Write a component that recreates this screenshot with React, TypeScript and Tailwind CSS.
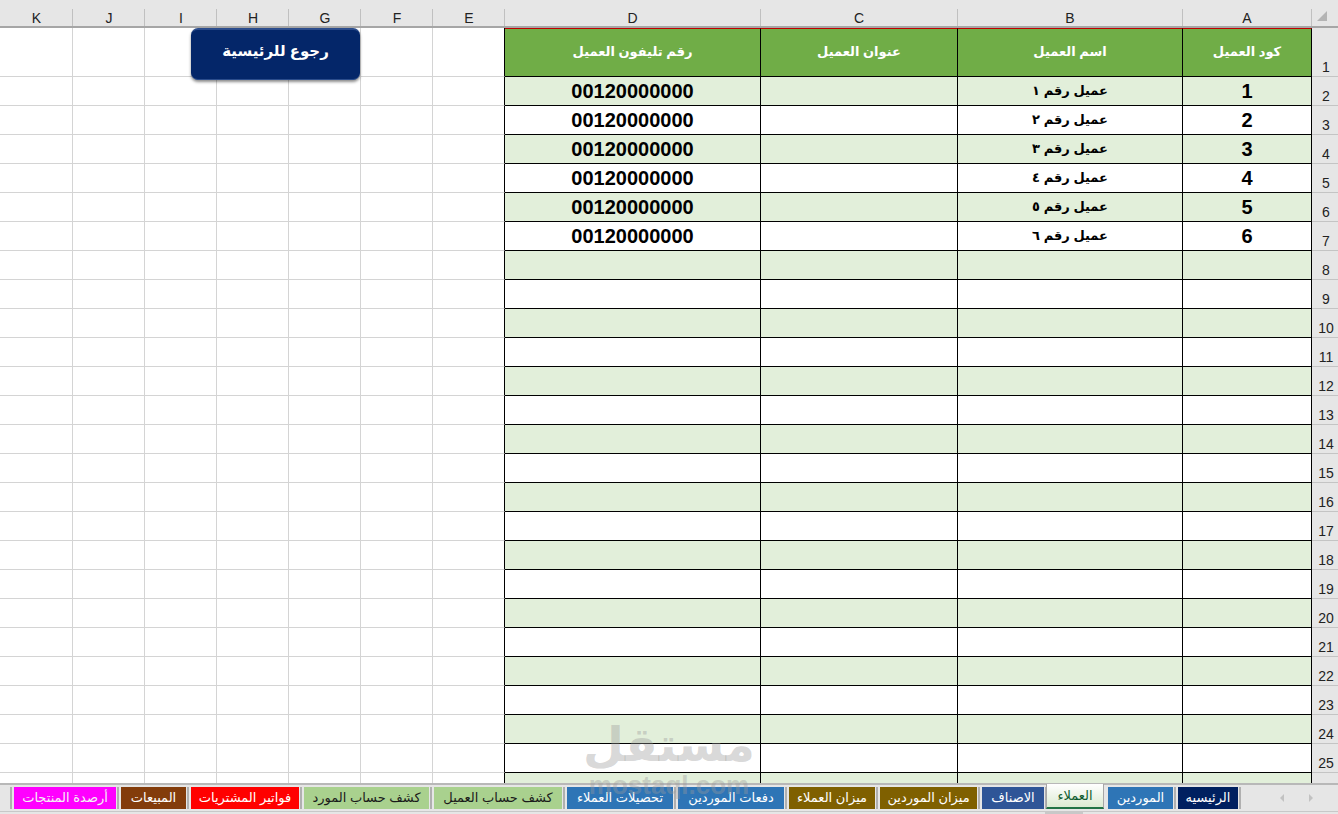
const font = { fontFamily: '"Liberation Sans", "DejaVu Sans", sans-serif' };

const letters = ["K", "J", "I", "H", "G", "F", "E", "D", "C", "B", "A"];
const cols = "grid-cols-[73px_72px_72px_72px_72px_72px_72px_256px_197px_225px_129px_26px]";
const arabicDigits = ["١", "٢", "٣", "٤", "٥", "٦"];

const tabs = [
  { label: "أرصدة المنتجات", w: "w-[102px]", bg: "bg-[#ff00ff]", fg: "text-[#f3f3f3]" },
  { label: "المبيعات", w: "w-[65px]", bg: "bg-[#833c0b]", fg: "text-white" },
  { label: "فواتير المشتريات", w: "w-[108px]", bg: "bg-[#ff0000]", fg: "text-white" },
  { label: "كشف حساب المورد", w: "w-[125px]", bg: "bg-[#a9d18e]", fg: "text-[#1a1a1a]" },
  { label: "كشف حساب العميل", w: "w-[128px]", bg: "bg-[#a9d18e]", fg: "text-[#1a1a1a]" },
  { label: "تحصيلات العملاء", w: "w-[106px]", bg: "bg-[#2e75b6]", fg: "text-white" },
  { label: "دفعات الموردين", w: "w-[106px]", bg: "bg-[#2e75b6]", fg: "text-white" },
  { label: "ميزان العملاء", w: "w-[86px]", bg: "bg-[#7f6000]", fg: "text-white" },
  { label: "ميزان الموردين", w: "w-[97px]", bg: "bg-[#7f6000]", fg: "text-white" },
  { label: "الاصناف", w: "w-[62px]", bg: "bg-[#2f5597]", fg: "text-white" },
];

function Sep() {
  return <div className="w-[2px] h-[22px] ml-[1px] mr-[2px] bg-[#b0b0b0] shrink-0" />;
}

function Row({ n }: { n: number }) {
  const even = n % 2 === 0;
  const bg = even ? "bg-[#e2efda]" : "bg-white";
  const idx = n - 2;
  const hasData = idx < 6;
  const table = `${bg} border-r border-b border-black flex items-center justify-center text-black font-bold`;
  return (
    <>
      {[0, 1, 2, 3, 4, 5, 6].map((i) => (
        <div key={i} className={`border-b border-r bg-white border-[#d4d4d4] ${i === 6 ? "border-r-black" : ""}`} />
      ))}
      <div className={`${table} text-[20px] leading-none`}>{hasData ? "00120000000" : ""}</div>
      <div className={table} />
      <div className={`${table} text-[13px]`} dir="rtl">{hasData ? `عميل رقم ${arabicDigits[idx]}` : ""}</div>
      <div className={`${table} text-[20px] leading-none`}>{hasData ? n - 1 : ""}</div>
      <div className="bg-[#e6e6e6] border-b border-[#c4c4c4] flex items-end justify-center text-[14px] text-[#222] leading-[17px] pl-[2px]">{n < 26 ? n : ""}</div>
    </>
  );
}

export default function App() {
  return (
    <div style={font} className="relative w-[1338px] h-[814px] overflow-hidden bg-[#e6e6e6] flex flex-col">
      <div className="h-[9px] shrink-0 bg-[#e6e6e6]" />
      <div className={`grid ${cols} h-[19px] shrink-0 border-b-2 border-[#a6a6a6]`}>
        {letters.map((l, i) => (
          <div key={l} className={`border-r border-[#c0c0c0] flex items-center justify-center text-[14px] text-[#222] leading-none ${i < 7 ? "pl-[1px]" : ""}`}>{l}</div>
        ))}
        <div className="relative">
          <svg width="12" height="12" viewBox="0 0 12 12" className="absolute left-[4px] top-[1px]"><path d="M11 1V11H1Z" fill="#b4b4b4" /></svg>
        </div>
      </div>
      <div className={`grid ${cols} grid-rows-[49px] auto-rows-[29px] grow overflow-hidden content-start`}>
        {[0, 1, 2, 3, 4, 5, 6].map((i) => (
          <div key={i} className={`border-b border-r bg-white border-[#d4d4d4] ${i === 6 ? "border-r-black" : ""}`} />
        ))}
        {["رقم تليفون العميل", "عنوان العميل", "اسم العميل", "كود العميل"].map((t) => (
          <div key={t} dir="rtl" className="bg-[#70ad47] border-r border-b border-t border-b-black border-r-black border-t-[#c00000] flex items-center justify-center text-white font-bold text-[13px] pb-[1px]">{t}</div>
        ))}
        <div className="bg-[#e6e6e6] border-b border-[#c4c4c4] flex items-end justify-center text-[14px] text-[#222] leading-[17px] pl-[2px]">1</div>
        {Array.from({ length: 25 }, (_, i) => i + 2).map((n) => (
          <Row key={n} n={n} />
        ))}
      </div>
      <div className="h-[31px] shrink-0 border-t-2 border-[#b8b8b8] bg-[#e6e6e6] relative">
        <div className="flex items-center pl-[9px] pt-[1px] h-[25px]">
          <Sep />
          {tabs.map((t) => (
            <div key={t.label} className="flex items-center">
              <div dir="rtl" className={`${t.w} ${t.bg} ${t.fg} h-[22px] flex items-center justify-center text-[13px] whitespace-nowrap`}>{t.label}</div>
              <Sep />
            </div>
          ))}
          <div dir="rtl" className="w-[58px] h-[25px] -ml-[3px] -mt-[3px] bg-gradient-to-b from-white to-[#dcebd2] border-b-2 border-[#217346] border-x border-x-[#a6a6a6] flex items-center justify-center text-[13px] text-[#0e5c2f]">العملاء</div>
          <div className="w-[4px]" />
          <div dir="rtl" className="w-[65px] h-[22px] bg-[#2e75b6] text-white flex items-center justify-center text-[13px]">الموردين</div>
          <Sep />
          <div dir="rtl" className="w-[60px] h-[22px] bg-[#002060] text-white flex items-center justify-center text-[13px]">الرئيسيه</div>
          <Sep />
          <svg width="6" height="10" viewBox="0 0 6 10" className="ml-[36px]"><path d="M5 1V9L1 5Z" fill="#c2c2c2" /></svg>
          <svg width="6" height="10" viewBox="0 0 6 10" className="ml-[23px]"><path d="M1 1V9L5 5Z" fill="#c2c2c2" /></svg>
        </div>
        <div className="absolute bottom-0 left-0 right-0 h-[3px] border-t border-[#c8c8c8]">
          <div className="ml-[1045px] w-[38px] h-[3px] bg-[#c8c8c8]" />
        </div>
      </div>

      {/* floating button over the sheet */}
      <div dir="rtl" className="absolute left-[191px] top-[28px] w-[169px] h-[52px] rounded-[7px] bg-[#042669] border-t-2 border-t-[#2b4c8c] border-b border-b-[#2b4c8c] shadow-[0_2px_3px_rgba(0,0,0,0.45)] flex items-center justify-center text-white font-bold text-[15px] pb-[6px]">رجوع للرئيسية</div>

      {/* site watermark */}
      <div className="absolute left-[586px] top-[718px] w-[166px] pointer-events-none flex flex-col items-center text-[#9a9a9a]/40 font-bold leading-none">
        <div dir="rtl" className="text-[47px] leading-[54px] whitespace-nowrap">مستقل</div>
        <div className="text-[26px] leading-[26px]">mostaql.com</div>
      </div>
    </div>
  );
}
